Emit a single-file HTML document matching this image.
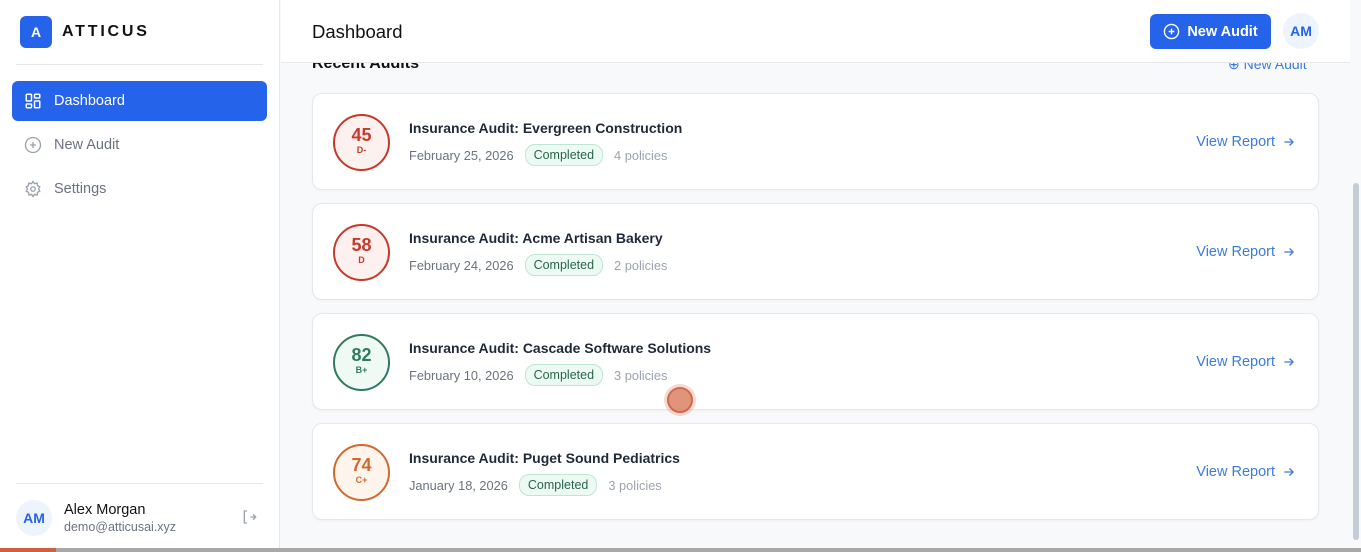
<!DOCTYPE html>
<html><head><meta charset="utf-8"><style>
*{box-sizing:border-box;margin:0;padding:0}
body{width:1361px;height:552px;overflow:hidden;font-family:"Liberation Sans",sans-serif;background:#f8f9fb;position:relative;color:#111827}
.side{position:absolute;left:0;top:0;width:280px;height:548px;background:#fff;border-right:1px solid #e5e7eb}
.logo{position:absolute;left:20px;top:16px;width:32px;height:32px;border-radius:6px;background:#2563eb;color:#fff;font-weight:bold;font-size:14px;display:flex;align-items:center;justify-content:center}
.brand{position:absolute;left:62px;top:23px;font-size:16px;font-weight:bold;letter-spacing:2.8px;color:#111}
.hr{position:absolute;left:16px;width:247px;height:1px;background:#e5e7eb}
.nav{position:absolute;left:12px;width:255px;height:40px;border-radius:6px;display:flex;align-items:center;padding-left:12px;font-size:14.5px;color:#6b7280}
.nav svg{margin-right:12px}
.nav.act{background:#2563eb;color:#fff}
.av{border-radius:50%;background:#eef4fd;color:#2563eb;font-weight:bold;display:flex;align-items:center;justify-content:center}
.top{position:absolute;left:281px;top:0;width:1069px;height:63px;background:#fff;border-bottom:1px solid #e5e7eb;z-index:2}
.btn{position:absolute;left:869px;top:14px;width:121px;height:35px;background:#2563eb;border-radius:6px;color:#fff;font-size:14.5px;font-weight:bold;display:flex;align-items:center;justify-content:center;gap:7px}
.card{position:absolute;left:312px;width:1007px;height:97px;background:#fff;border:1px solid #e5e7eb;border-radius:10px;box-shadow:0 1px 2px rgba(0,0,0,.04)}
.circ{position:absolute;left:20px;top:20px;width:57px;height:57px;border-radius:50%;border:2px solid;text-align:center}
.circ b{display:block;font-size:18px;margin-top:9px;line-height:20px}
.circ i{display:block;font-style:normal;font-size:9px;font-weight:bold;line-height:11px}
.t{position:absolute;left:96px;top:26px;font-size:14px;font-weight:bold;color:#1f2937}
.m{position:absolute;left:96px;top:50px;font-size:12.8px;color:#6b7280;display:flex;align-items:center}
.pill{margin:0 11px;padding:3px 8px;border:1px solid #bfe6d5;background:#ecfaf3;color:#276749;border-radius:10px;font-size:12.5px}
.pol{color:#9ca3af}
.vr{position:absolute;right:22px;top:40px;color:#3b7be0;font-size:14.5px;display:flex;align-items:center;gap:7px}
</style></head><body>
<div class="side">
<div class="logo">A</div><div class="brand">ATTICUS</div>
<div class="hr" style="top:64px"></div>
<div class="nav act" style="top:81px"><svg width="18" height="18" viewBox="0 0 24 24" fill="none" stroke="#fff" stroke-width="2"><rect x="3" y="3" width="7" height="9" rx="1"/><rect x="14" y="3" width="7" height="5" rx="1"/><rect x="14" y="12" width="7" height="9" rx="1"/><rect x="3" y="16" width="7" height="5" rx="1"/></svg>Dashboard</div>
<div class="nav" style="top:125px"><svg width="18" height="18" viewBox="0 0 24 24" fill="none" stroke="#9ca3af" stroke-width="1.8"><circle cx="12" cy="12" r="10"/><path d="M12 8v8M8 12h8"/></svg>New Audit</div>
<div class="nav" style="top:169px"><svg width="18" height="18" viewBox="0 0 24 24" fill="none" stroke="#9ca3af" stroke-width="1.8"><circle cx="12" cy="12" r="3"/><path d="M12 2l2 3 3.5-1 .5 3.5 3 1.5-1.5 3 1.5 3-3 1.5-.5 3.5-3.5-1-2 3-2-3-3.5 1-.5-3.5-3-1.5 1.5-3-1.5-3 3-1.5.5-3.5 3.5 1z"/></svg>Settings</div>
<div class="hr" style="top:483px"></div>
<div class="av" style="position:absolute;left:16px;top:500px;width:36px;height:36px;font-size:14px">AM</div>
<div style="position:absolute;left:64px;top:502px;font-size:14.5px;color:#111">Alex Morgan</div>
<div style="position:absolute;left:64px;top:520px;font-size:12.5px;color:#6b7280">demo@atticusai.xyz</div>
<svg style="position:absolute;left:241px;top:509px" width="16" height="16" viewBox="0 0 24 24" fill="none" stroke="#9ca3af" stroke-width="2"><path d="M9 3H5v18h4M14 12h8M18 8l4 4-4 4"/></svg>
</div>
<div class="top">
<div style="position:absolute;left:31px;top:21px;font-size:18.5px;color:#111">Dashboard</div>
<div class="btn"><svg width="17" height="17" viewBox="0 0 24 24" fill="none" stroke="#fff" stroke-width="2"><circle cx="12" cy="12" r="10"/><path d="M12 8v8M8 12h8"/></svg>New Audit</div>
<div class="av" style="position:absolute;left:1002px;top:13px;width:36px;height:36px;font-size:14px">AM</div>
</div>
<div style="position:absolute;left:312px;top:55px;font-size:16px;font-weight:bold;color:#111">Recent Audits</div>
<div style="position:absolute;left:1228px;top:56px;font-size:14px;color:#3b7be0">⊕ New Audit</div>

<div class="card" style="top:93px"><div class="circ" style="border-color:#c53a2a;background:#fdf1ef;color:#c53a2a"><b>45</b><i>D-</i></div><div class="t">Insurance Audit: Evergreen Construction</div><div class="m">February 25, 2026<span class="pill">Completed</span><span class="pol">4 policies</span></div><div class="vr">View Report <svg width="14" height="14" viewBox="0 0 24 24" fill="none" stroke="#3b7be0" stroke-width="2.2"><path d="M4 12h15M13 6l6 6-6 6"/></svg></div></div>
<div class="card" style="top:203px"><div class="circ" style="border-color:#c53a2a;background:#fdf1ef;color:#c53a2a"><b>58</b><i>D</i></div><div class="t">Insurance Audit: Acme Artisan Bakery</div><div class="m">February 24, 2026<span class="pill">Completed</span><span class="pol">2 policies</span></div><div class="vr">View Report <svg width="14" height="14" viewBox="0 0 24 24" fill="none" stroke="#3b7be0" stroke-width="2.2"><path d="M4 12h15M13 6l6 6-6 6"/></svg></div></div>
<div class="card" style="top:313px"><div class="circ" style="border-color:#2f7a60;background:#f0faf5;color:#2f7a60"><b>82</b><i>B+</i></div><div class="t">Insurance Audit: Cascade Software Solutions</div><div class="m">February 10, 2026<span class="pill">Completed</span><span class="pol">3 policies</span></div><div class="vr">View Report <svg width="14" height="14" viewBox="0 0 24 24" fill="none" stroke="#3b7be0" stroke-width="2.2"><path d="M4 12h15M13 6l6 6-6 6"/></svg></div></div>
<div class="card" style="top:423px"><div class="circ" style="border-color:#d0692e;background:#fdf5ec;color:#d0692e"><b>74</b><i>C+</i></div><div class="t">Insurance Audit: Puget Sound Pediatrics</div><div class="m">January 18, 2026<span class="pill">Completed</span><span class="pol">3 policies</span></div><div class="vr">View Report <svg width="14" height="14" viewBox="0 0 24 24" fill="none" stroke="#3b7be0" stroke-width="2.2"><path d="M4 12h15M13 6l6 6-6 6"/></svg></div></div>

<div style="position:absolute;left:667px;top:387px;width:26px;height:26px;border-radius:50%;background:#e0957a;border:2px solid #d06a4c;box-shadow:0 0 0 3px rgba(224,149,122,.35)"></div>
<div style="position:absolute;left:1350px;top:0;width:11px;height:548px;background:#f8f9fb"></div>
<div style="position:absolute;left:1353px;top:183px;width:6px;height:357px;background:#c4ccd6;border-radius:3px"></div>
<div style="position:absolute;left:0;top:548px;width:1361px;height:4px;background:#a8a8a8"></div>
<div style="position:absolute;left:0;top:548px;width:56px;height:4px;background:#d0603e"></div>
</body></html>
